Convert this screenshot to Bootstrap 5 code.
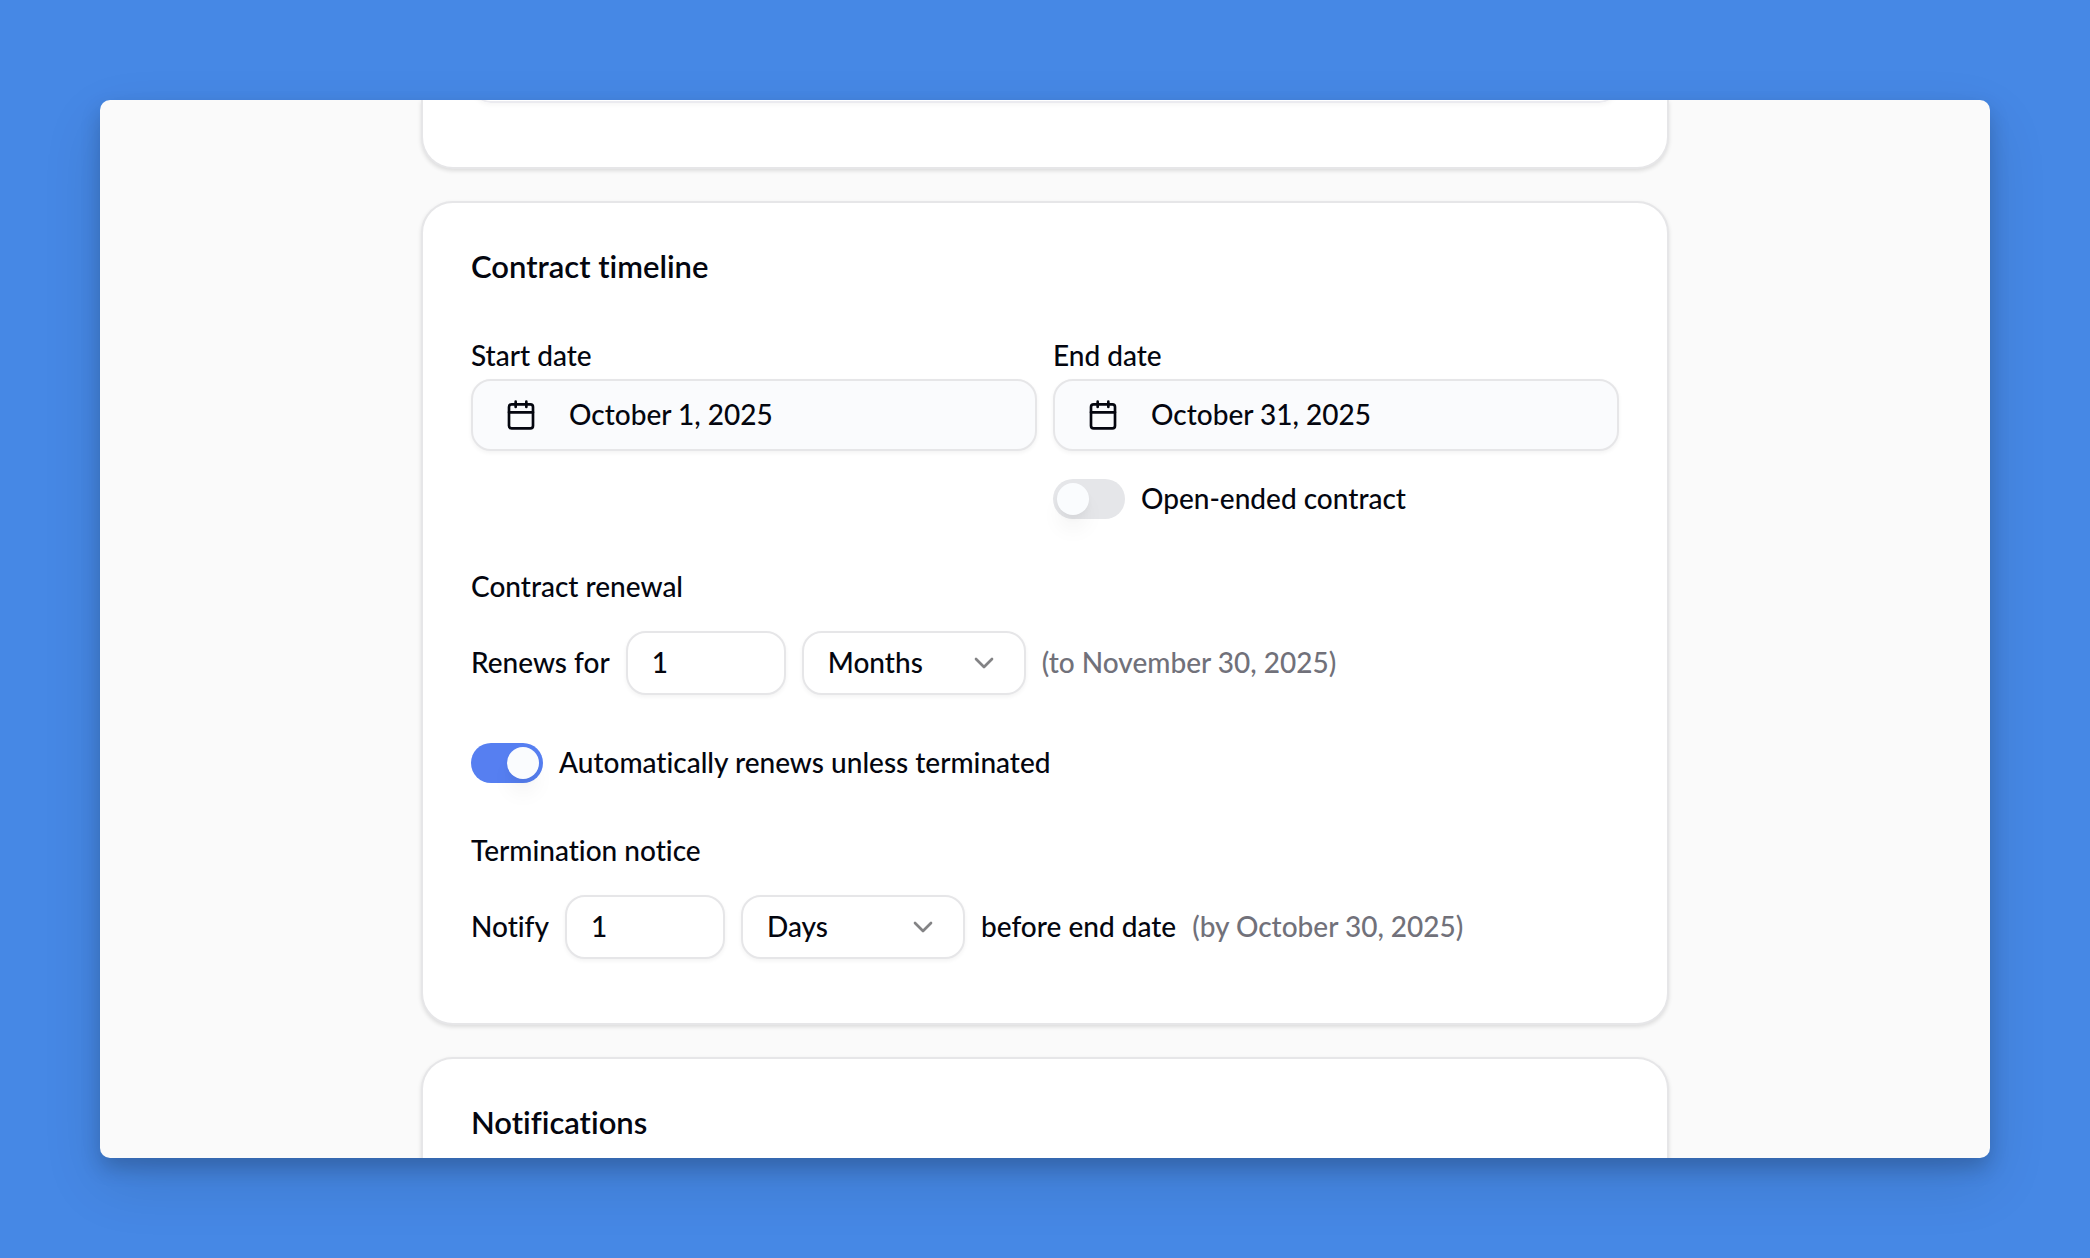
<!DOCTYPE html>
<html lang="en">
<head>
<meta charset="utf-8">
<meta name="viewport" content="width=device-width, initial-scale=1">
<title>Contract timeline</title>
<link href="https://cdn.jsdelivr.net/npm/bootstrap@5.3.0/dist/css/bootstrap.min.css" rel="stylesheet">
<style>
  :root { --ink: #04060f; --muted: #71717a; --line: #e6e6e8; --accent: #567ff1; }
  body {
    min-height: 100vh; padding: 100px; background: #4688e5; color: var(--ink);
    font-family: Lato, "Open Sans", sans-serif; font-size: 28px; font-weight: 500; line-height: 42px;
    font-variant-ligatures: none;
  }
  .app-window {
    height: calc(100vh - 200px); border-radius: 10px; background: #fafafa;
    box-shadow: 0 10px 20px rgba(0, 0, 0, .18), 0 24px 60px rgba(0, 0, 0, .12);
  }
  .stack { max-width: 1248px; gap: 32px; }
  .panel { padding: 48px; border: 2px solid var(--line); border-radius: 32px; background: #fff; box-shadow: 0 2px 4px rgba(0, 0, 0, .12); }
  .panel-above { padding: 0 48px 64px; border-top: 0; border-top-left-radius: 0; border-top-right-radius: 0; }
  .panel-main { padding-bottom: 64px; }
  .panel-below { border-bottom: 0; border-bottom-left-radius: 0; border-bottom-right-radius: 0; }
  /* the field above is scrolled out except for its lower edge */
  .field-end { height: 64px; margin-top: -61px; border: 2px solid #ebebf0; border-radius: 20px; box-shadow: 0 2px 4px rgba(0, 0, 0, .04); }
  .panel-title { font-size: 31px; font-weight: 600; line-height: 30px; }
  .dates { margin-top: 50px; gap: 16px; }
  .dates > div { flex: 1 1 0; }
  .field-label { line-height: 48px; }
  .date-btn, .num-box, .unit-box {
    border: 2px solid var(--line); border-radius: 20px; color: var(--ink); font-size: 28px; font-weight: 500; line-height: 42px;
    box-shadow: 0 2px 4px rgba(0, 0, 0, .05);
  }
  .date-btn { height: 72px; padding: 0 32px; gap: 32px; background: #fafbfd; text-align: left; }
  .num-box { width: 160px; height: 64px; padding: 0 24px 2px; }
  .unit-box {
    width: 224px; height: 64px; padding: 0 24px 2px;
    background: #fff url("data:image/svg+xml,%3Csvg xmlns='http://www.w3.org/2000/svg' viewBox='0 0 24 24' fill='none' stroke='%23838385' stroke-width='2' stroke-linecap='round' stroke-linejoin='round'%3E%3Cpath d='m6 9 6 6 6-6'/%3E%3C/svg%3E") no-repeat right 24px center / 32px 32px;
  }
  .line-row { gap: 16px; }
  .line-row > label, .line-row > span, .date-btn > span, .toggle > label { padding-bottom: 2px; }
  .toggle { min-height: 40px; padding: 0; margin: 0; gap: 16px; line-height: 38px; }
  .toggle .form-check-input {
    display: flex; flex: none; width: 72px; height: 40px; margin: 0; padding: 4px; float: none;
    border: 0; border-radius: 20px; background: #e5e6e9;
  }
  .toggle .form-check-input::before {
    content: ""; width: 32px; height: 32px; border-radius: 50%; background: #fafcfe;
    box-shadow: 0 16px 20px rgba(0, 0, 0, .04), 0 4px 6px rgba(0, 0, 0, .03);
  }
  .toggle .form-check-input:checked { background: var(--accent); }
  .toggle .form-check-input:checked::before { margin-left: 32px; }
  .toggle-end { margin-top: 28px; }
  .toggle-renew { margin-top: 48px; }
  .group { margin-top: 46px; }
  .group-title { margin-bottom: 24px; font-size: 28px; font-weight: 500; line-height: 42px; }
  .hint { color: var(--muted); }
</style>
</head>
<body>
<main class="app-window overflow-hidden">
  <div class="stack d-flex flex-column h-100 mx-auto">
    <section class="panel panel-above flex-shrink-0"><div class="field-end"></div></section>

    <section class="panel panel-main flex-shrink-0">
      <h2 class="panel-title mb-0">Contract timeline</h2>
      <div class="dates d-flex">
        <div>
          <label class="field-label d-block" for="start">Start date</label>
          <button id="start" type="button" class="date-btn d-flex align-items-center w-100">
            <svg width="32" height="32" viewBox="0 0 24 24" fill="none" stroke="currentColor" stroke-width="2" stroke-linecap="round" stroke-linejoin="round" aria-hidden="true"><rect x="3" y="4" width="18" height="18" rx="2"/><path d="M3 10h18M8 2v4M16 2v4"/></svg>
            <span>October 1, 2025</span>
          </button>
        </div>
        <div>
          <label class="field-label d-block" for="end">End date</label>
          <button id="end" type="button" class="date-btn d-flex align-items-center w-100">
            <svg width="32" height="32" viewBox="0 0 24 24" fill="none" stroke="currentColor" stroke-width="2" stroke-linecap="round" stroke-linejoin="round" aria-hidden="true"><rect x="3" y="4" width="18" height="18" rx="2"/><path d="M3 10h18M8 2v4M16 2v4"/></svg>
            <span>October 31, 2025</span>
          </button>
          <div class="toggle toggle-end form-check form-switch d-flex align-items-center">
            <input class="form-check-input" type="checkbox" role="switch" id="open">
            <label for="open">Open-ended contract</label>
          </div>
        </div>
      </div>

      <div class="group">
        <h3 class="group-title">Contract renewal</h3>
        <div class="line-row d-flex align-items-center">
          <label for="renewCount">Renews for</label>
          <input id="renewCount" class="num-box form-control" type="text" inputmode="numeric" value="1">
          <select class="unit-box form-select" aria-label="Renewal unit"><option>Months</option><option>Days</option></select>
          <span class="hint">(to November 30, 2025)</span>
        </div>
        <div class="toggle toggle-renew form-check form-switch d-flex align-items-center">
          <input class="form-check-input" type="checkbox" role="switch" id="auto" checked>
          <label for="auto">Automatically renews unless terminated</label>
        </div>
      </div>

      <div class="group">
        <h3 class="group-title">Termination notice</h3>
        <div class="line-row d-flex align-items-center">
          <label for="noticeCount">Notify</label>
          <input id="noticeCount" class="num-box form-control" type="text" inputmode="numeric" value="1">
          <select class="unit-box form-select" aria-label="Notice unit"><option>Days</option><option>Months</option></select>
          <span>before end date</span>
          <span class="hint">(by October 30, 2025)</span>
        </div>
      </div>
    </section>

    <section class="panel panel-below flex-grow-1">
      <h2 class="panel-title mb-0">Notifications</h2>
    </section>
  </div>
</main>
<script src="https://cdn.jsdelivr.net/npm/bootstrap@5.3.0/dist/js/bootstrap.bundle.min.js"></script>
</body>
</html>
